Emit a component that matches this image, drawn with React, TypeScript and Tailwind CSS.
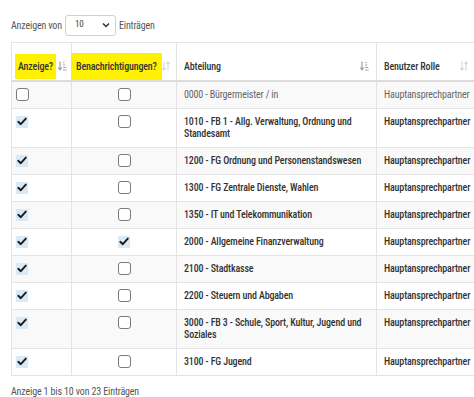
import React from "react";

type Row = {
  anzeige: boolean;
  benachrichtigung: boolean;
  abteilung: string;
  rolle: string;
  muted?: boolean;
};

const rows: Row[] = [
  { anzeige: false, benachrichtigung: false, abteilung: "0000 - Bürgermeister / in", rolle: "Hauptansprechpartner", muted: true },
  { anzeige: true, benachrichtigung: false, abteilung: "1010 - FB 1 - Allg. Verwaltung, Ordnung und Standesamt", rolle: "Hauptansprechpartner" },
  { anzeige: true, benachrichtigung: false, abteilung: "1200 - FG Ordnung und Personenstandswesen", rolle: "Hauptansprechpartner" },
  { anzeige: true, benachrichtigung: false, abteilung: "1300 - FG Zentrale Dienste, Wahlen", rolle: "Hauptansprechpartner" },
  { anzeige: true, benachrichtigung: false, abteilung: "1350 - IT und Telekommunikation", rolle: "Hauptansprechpartner" },
  { anzeige: true, benachrichtigung: true, abteilung: "2000 - Allgemeine Finanzverwaltung", rolle: "Hauptansprechpartner" },
  { anzeige: true, benachrichtigung: false, abteilung: "2100 - Stadtkasse", rolle: "Hauptansprechpartner" },
  { anzeige: true, benachrichtigung: false, abteilung: "2200 - Steuern und Abgaben", rolle: "Hauptansprechpartner" },
  { anzeige: true, benachrichtigung: false, abteilung: "3000 - FB 3 - Schule, Sport, Kultur, Jugend und Soziales", rolle: "Hauptansprechpartner" },
  { anzeige: true, benachrichtigung: false, abteilung: "3100 - FG Jugend", rolle: "Hauptansprechpartner" },
];

const SortActive = () => (
  <svg width="9" height="10" viewBox="0 0 9 10" className="shrink-0">
    <path d="M2 0.5v8M0.3 6.5L2 8.8 3.7 6.5" stroke="#9a9a9a" strokeWidth="1.1" fill="none" />
    <path d="M5 1.5h1.5M5 4h2.3M5 6.5h3.3M5 9h3.8" stroke="#a8a8a8" strokeWidth="1" />
  </svg>
);

const SortIdle = () => (
  <svg width="8" height="10" viewBox="0 0 8 10" className="shrink-0">
    <path d="M2 0.5v8.5M0.4 7L2 9.2 3.6 7" stroke="#d6d6d6" strokeWidth="1.1" fill="none" />
    <path d="M6 9.5V1M4.4 3L6 0.8 7.6 3" stroke="#d6d6d6" strokeWidth="1.1" fill="none" />
  </svg>
);

const Box = ({ checked }: { checked: boolean }) =>
  checked ? (
    <span className="inline-flex h-[12px] w-[12px] items-center justify-center bg-[#d9e9f5]">
      <svg width="10" height="9" viewBox="0 0 10 9">
        <path d="M1.3 4.8L3.8 7.2 8.8 1.6" stroke="#1b1b1b" strokeWidth="1.9" fill="none" strokeLinecap="round" strokeLinejoin="round" />
      </svg>
    </span>
  ) : (
    <span className="inline-block h-[13px] w-[13px] rounded-[3px] border border-[#7a7a7a] bg-white" />
  );

export default function App() {
  return (
    <div
      className="h-[397px] w-[474px] overflow-hidden bg-white text-[10px] font-stretch-[80%] tracking-[-0.15px] text-[#333]"
      style={{ fontFamily: "Roboto, 'Liberation Sans', sans-serif" }}
    >
      <div className="flex h-[48px] items-center gap-[3px] pl-[11px] pt-[2px] text-[#555]">
        <span>Anzeigen von</span>
        <div className="flex h-[21px] w-[51px] items-center justify-between rounded-[3px] border border-[#d0d0d0] pl-[9px] pr-[5px] text-[9px] text-[#444]">
          <span>10</span>
          <svg width="8" height="6" viewBox="0 0 8 6">
            <path d="M1 1.5L4 4.5 7 1.5" stroke="#333" strokeWidth="1.5" fill="none" />
          </svg>
        </div>
        <span>Einträgen</span>
      </div>

      <div className="-mt-[6px] pl-[11px]">
        <table className="w-[465px] table-fixed border-collapse border border-[#e4e4e4]">
          <colgroup>
            <col className="w-[60px]" />
            <col className="w-[105px]" />
            <col className="w-[200px]" />
            <col className="w-[100px]" />
          </colgroup>
          <thead>
            <tr className="h-[38px] border-b-2 border-[#dcdcdc] font-medium">
              <th className="border-r border-[#e4e4e4] pl-[3px] pr-[4px] pb-[1px] align-bottom font-medium">
                <div className="flex items-center justify-between">
                  <span className="bg-[#fff200] px-[3px] py-[5px]">Anzeige?</span>
                  <SortActive />
                </div>
              </th>
              <th className="border-r border-[#e4e4e4] pl-0 pr-[7px] pb-0 align-bottom font-medium">
                <div className="flex items-center justify-between">
                  <span className="-ml-[1px] bg-[#fff200] px-[5px] py-[6px]">Benachrichtigungen?</span>
                  <SortIdle />
                </div>
              </th>
              <th className="border-r border-[#e4e4e4] px-[7px] pb-[6px] align-bottom font-medium">
                <div className="flex items-center justify-between">
                  <span>Abteilung</span>
                  <SortActive />
                </div>
              </th>
              <th className="pl-[7px] pr-[8px] pb-[6px] align-bottom font-medium">
                <div className="flex items-center justify-between">
                  <span>Benutzer Rolle</span>
                  <SortIdle />
                </div>
              </th>
            </tr>
          </thead>
          <tbody>
            {rows.map((r, i) => (
              <tr
                key={r.abteilung}
                className={`border-t border-[#e4e4e4] align-top leading-[12px] ${i % 2 === 0 ? "bg-[#f9f9f9]" : "bg-white"} ${r.muted ? "font-normal text-[#666]" : "font-medium text-[#333]"}`}
              >
                <td className="border-r border-[#e4e4e4] pl-[4px] py-[7px]">
                  <div className="flex h-[12px] items-center">
                    <Box checked={r.anzeige} />
                  </div>
                </td>
                <td className="border-r border-[#e4e4e4] py-[7px]">
                  <div className="flex h-[12px] items-center justify-center">
                    <Box checked={r.benachrichtigung} />
                  </div>
                </td>
                <td className="border-r border-[#e4e4e4] px-[7px] py-[7px]">{r.abteilung}</td>
                <td className="whitespace-nowrap pl-[7px] py-[7px]">{r.rolle}</td>
              </tr>
            ))}
          </tbody>
        </table>
      </div>

      <div className="pl-[11px] pt-[8px] text-[#555]">Anzeige 1 bis 10 von 23 Einträgen</div>
    </div>
  );
}
